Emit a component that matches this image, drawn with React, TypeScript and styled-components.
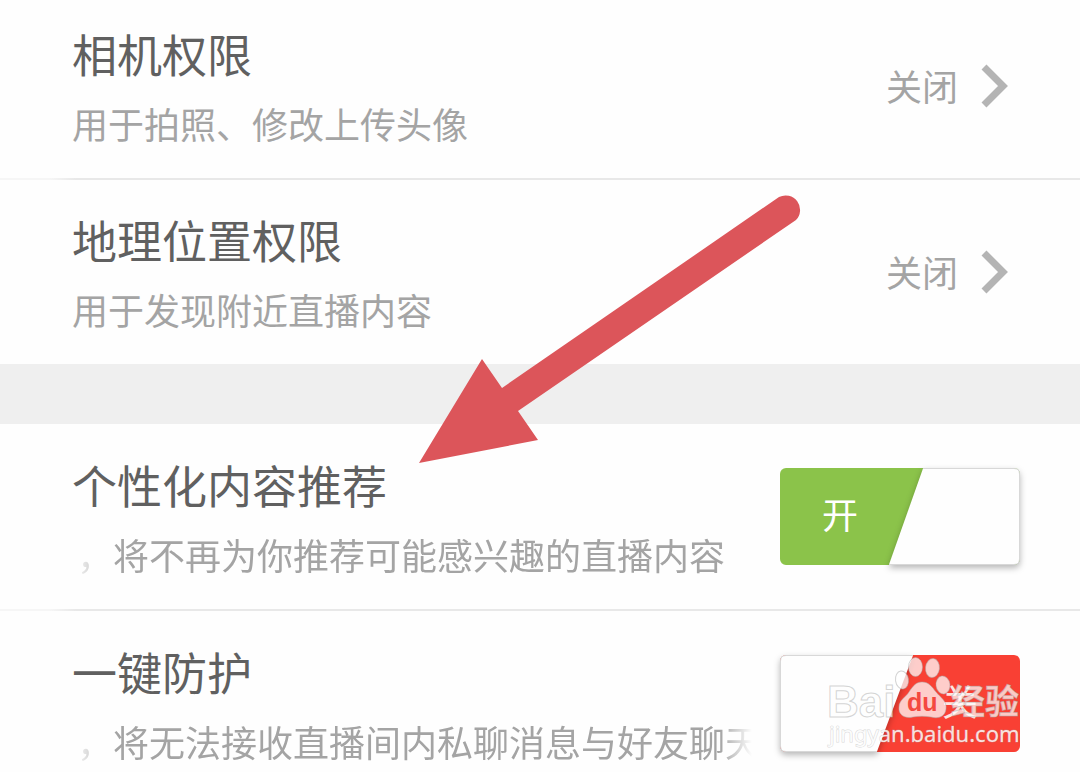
import React from "react";
import styled, { createGlobalStyle } from "styled-components";

const GlobalStyle = createGlobalStyle`
  * { box-sizing: border-box; }
  body {
    margin: 0;
    background: #fefefe;
    font-family: "Noto Sans CJK SC", sans-serif;
  }
`;

const Page = styled.main`
  position: relative;
  height: 100vh;
  overflow: hidden;
`;

const Group = styled.section<{ $scrolled?: boolean }>`
  margin-top: ${(p) => (p.$scrolled ? "-6px" : "0")};
`;

const Gap = styled.div`
  height: 60px;
  background: #efefef;
`;

const Divider = styled.hr`
  height: 2px;
  margin: 0;
  border: 0;
  background: linear-gradient(to right, #f6f6f6 50px, #e8e8e8 76px);
`;

const Row = styled.div<{ $tall?: boolean }>`
  display: flex;
  align-items: center;
  justify-content: space-between;
  gap: 24px;
  height: ${(p) => (p.$tall ? "185px" : "184px")};
  padding: 0 60px 0 72px;
`;

const Texts = styled.div`
  flex: 1;
  min-width: 0;
  padding-top: 1px;
`;

const Title = styled.h2`
  margin: 0;
  font-size: 45px;
  line-height: 60px;
  font-weight: 400;
  color: #606060;
  white-space: nowrap;
`;

const Desc = styled.p<{ $marquee?: boolean }>`
  margin: 13px 0 0;
  padding-left: ${(p) => (p.$marquee ? "5px" : "0")};
  font-size: 36px;
  line-height: 52px;
  color: #a4a4a4;
  white-space: nowrap;
  overflow: hidden;
  mask-image: ${(p) =>
    p.$marquee
      ? "linear-gradient(to right, transparent, #000 42px, #000 calc(100% - 36px), transparent calc(100% - 4px))"
      : "none"};
`;

const StatusButton = styled.button`
  display: flex;
  align-items: center;
  gap: 22px;
  padding: 0 10px 0 0;
  border: 0;
  background: none;
  font: inherit;
  font-size: 36px;
  line-height: 52px;
  color: #a4a4a4;
`;

const StatusText = styled.span`
  padding-bottom: 3px;
`;

const SwitchBox = styled.label<{ $on: boolean }>`
  position: relative;
  display: flex;
  align-items: center;
  justify-content: ${(p) => (p.$on ? "flex-start" : "flex-end")};
  width: 240px;
  height: 97px;
  padding: 0 42px 8px;
  border-radius: 6px;
  background: ${(p) => (p.$on ? "#8bc34a" : "#f94034")};
  color: ${(p) => (p.$on ? "#fff" : "#fde4e0")};
  font-size: 36px;
  line-height: 52px;
`;

const SwitchInput = styled.input`
  position: absolute;
  inset: 0;
  margin: 0;
  appearance: none;
`;

const Knob = styled.svg`
  position: absolute;
  inset: 0;
  overflow: visible;
  filter: drop-shadow(0 3px 3px rgba(0, 0, 0, 0.28));
  pointer-events: none;
`;

const Arrow = styled.svg`
  position: absolute;
  left: 418px;
  top: 192px;
  pointer-events: none;
`;

const Watermark = styled.svg`
  position: absolute;
  right: 56px;
  top: 652px;
  pointer-events: none;
`;

const Chevron = () => (
  <svg width="30" height="44" viewBox="0 0 30 44" fill="none" stroke="#b4b4b4" strokeWidth="7" aria-hidden="true">
    <path d="M4 3 L23 22 L4 41" />
  </svg>
);

type PermissionProps = { title: string; desc: string };

const PermissionRow = ({ title, desc }: PermissionProps) => (
  <Row>
    <Texts>
      <Title>{title}</Title>
      <Desc>{desc}</Desc>
    </Texts>
    <StatusButton type="button" aria-label={`${title} 关闭`}>
      <StatusText>关闭</StatusText>
      <Chevron />
    </StatusButton>
  </Row>
);

const KNOB_ON = "M143 .5 H234 Q239.500 .5 239.500 6 V91 Q239.500 96.500 234 96.500 H109";
const KNOB_OFF = "M133 .5 H6 Q.5 .5 .5 6 V91 Q.5 96.500 6 96.500 H97";

const SwitchRow = ({ title, desc, on }: PermissionProps & { on: boolean }) => (
  <Row $tall>
    <Texts>
      <Title>{title}</Title>
      <Desc $marquee>{desc}</Desc>
    </Texts>
    <SwitchBox $on={on}>
      <SwitchInput type="checkbox" role="switch" defaultChecked={on} aria-label={title} />
      {on ? "开" : "关"}
      <Knob width="240" height="97" viewBox="0 0 240 97" aria-hidden="true">
        <path d={`${on ? KNOB_ON : KNOB_OFF} Z`} fill="#fefefe" />
        <path d={on ? KNOB_ON : KNOB_OFF} fill="none" stroke="#d8d8d8" />
      </Knob>
    </SwitchBox>
  </Row>
);

const BrandMark = () => (
  <Watermark width="200" height="102" viewBox="824 652 200 102" aria-hidden="true">
    <g
      fill="#fff"
      fillOpacity=".74"
      stroke="#aaa"
      strokeOpacity=".5"
      strokeWidth="1"
      fontWeight="700"
    >
      <text x="827" y="717" fontFamily="Liberation Sans, sans-serif" fontSize="44">Bai</text>
      <ellipse cx="902" cy="680" rx="6.500" ry="9" transform="rotate(-8 902 680)" />
      <ellipse cx="915.500" cy="667" rx="7" ry="9.500" />
      <ellipse cx="932.500" cy="668" rx="7" ry="9.500" transform="rotate(6 932 668)" />
      <ellipse cx="943" cy="685" rx="7" ry="9" transform="rotate(-8 943 685)" />
      <path d="M922 682 C929 682 932 687 936 692 C941 698 947 701 946 709 C945 717 938 719 931 717 C925 716 919 716 913 717 C905 719 898 715 899 707 C899 700 906 697 909 692 C913 686 916 682 922 682 Z" />
      <text x="951" y="714" fontSize="34">经验</text>
    </g>
    <text x="907" y="711" fontFamily="Liberation Sans, sans-serif" fontSize="25" fontWeight="700" fill="#f4493f">du</text>
    <text
      x="829"
      y="742"
      fontFamily="Noto Sans, sans-serif"
      fontSize="22"
      fill="#fff"
      fillOpacity=".84"
      stroke="#aaa"
      strokeOpacity=".45"
      strokeWidth="1"
      paintOrder="stroke"
    >
      jingyan.baidu.com
    </text>
  </Watermark>
);

export default function App() {
  return (
    <>
      <GlobalStyle />
      <Page>
        <Group $scrolled>
          <PermissionRow title="相机权限" desc="用于拍照、修改上传头像" />
          <Divider />
          <PermissionRow title="地理位置权限" desc="用于发现附近直播内容" />
        </Group>
        <Gap />
        <Group>
          <SwitchRow title="个性化内容推荐" desc="，将不再为你推荐可能感兴趣的直播内容" on />
          <Divider />
          <SwitchRow title="一键防护" desc="，将无法接收直播间内私聊消息与好友聊天" on={false} />
        </Group>
        <Arrow width="386" height="274" viewBox="418 192 386 274" aria-hidden="true">
          <path d="M419 463 L482 359 L502 388 L779 197 A14.500 14.500 0 0 1 796 220 L518 411 L538 440 Z" fill="#dc555a" />
        </Arrow>
        <BrandMark />
      </Page>
    </>
  );
}
